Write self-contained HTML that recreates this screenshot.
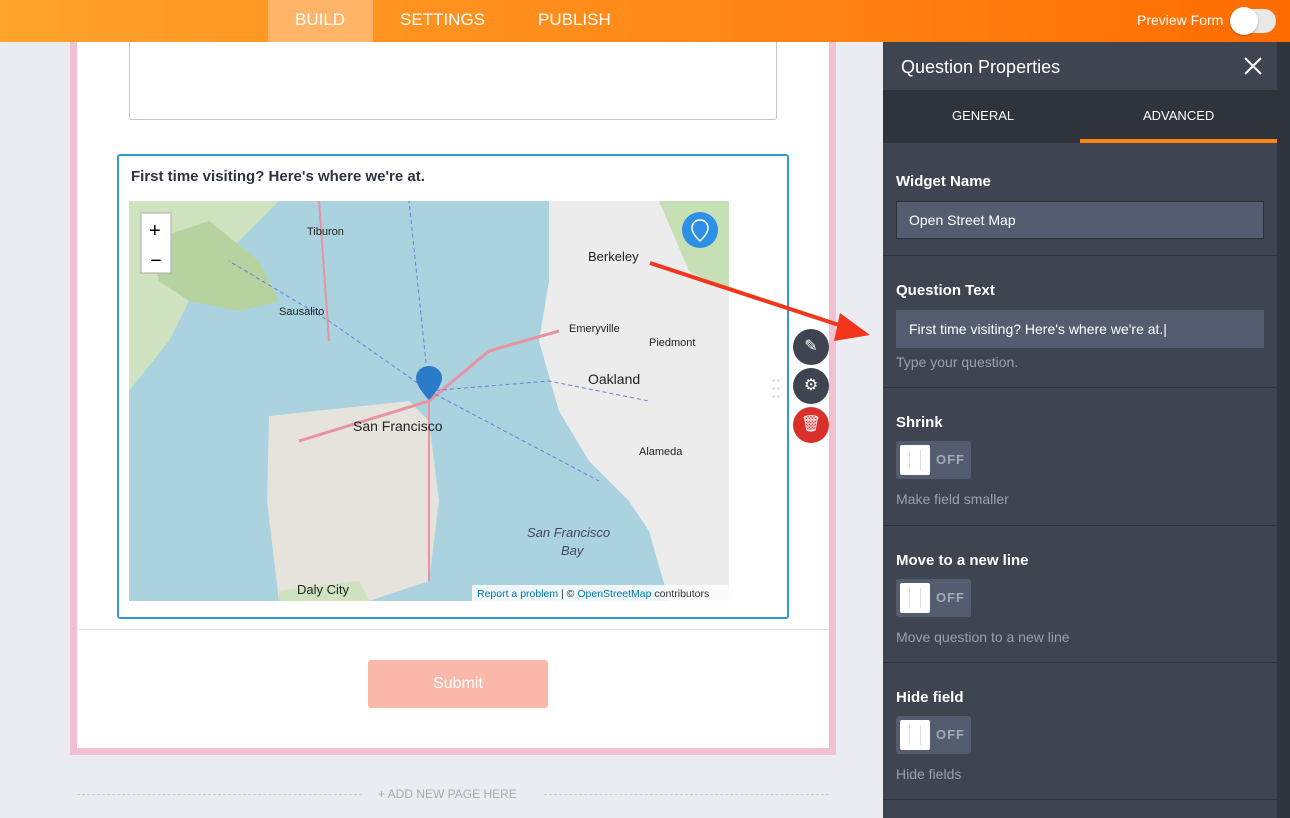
<!DOCTYPE html>
<html><head><style>
*{box-sizing:border-box;margin:0;padding:0}
body{width:1290px;height:818px;overflow:hidden;background:#ebecf1;font-family:"Liberation Sans",sans-serif;position:relative}
.hdr{position:absolute;left:0;top:0;width:1290px;height:42px;background:linear-gradient(90deg,#ffa32c,#ff8515 60%,#ff6c00);z-index:10}
.tab{position:absolute;top:0;height:42px;line-height:40px;color:#fff;font-size:17px}
.panel{position:absolute;left:883px;top:42px;width:394px;height:776px;background:#3e4450;color:#fff}
.sec{position:absolute;left:0;width:394px;border-bottom:1px solid #2f333b}
.lbl{position:absolute;left:13px;font-weight:bold;font-size:15px}
.inp{position:absolute;left:13px;width:368px;height:38px;background:#545d6f;border:1px solid #2c3038;color:#fff;font-size:14px;line-height:36px;padding-left:12px}
.hint{position:absolute;left:13px;font-size:14px;color:#9aa0ab}
.tg{position:absolute;left:13px;width:75px;height:38px;background:#545d6f;border-radius:3px}
.tg i{position:absolute;left:4px;top:4px;width:30px;height:30px;background:#fff;border-radius:2px}
.tg i:after{content:"";position:absolute;left:9px;top:5px;width:10px;height:20px;border-left:1px solid #ddd;border-right:1px solid #ddd}
.tg b{position:absolute;left:40px;top:11px;font-size:13px;color:#a3a9b5;letter-spacing:1px}
.circ{position:absolute;left:793px;width:36px;height:36px;border-radius:50%;background:#3e4450;color:#fff;text-align:center;line-height:36px;font-size:16px}
</style></head><body>
<div class="hdr">
<div style="position:absolute;left:268px;top:0;width:105px;height:42px;background:#ffb468"></div>
<div class="tab" style="left:295px">BUILD</div>
<div class="tab" style="left:400px">SETTINGS</div>
<div class="tab" style="left:538px">PUBLISH</div>
<div class="tab" style="left:1137px;font-size:14px">Preview Form</div>
<div style="position:absolute;left:1232px;top:9px;width:44px;height:24px;border-radius:12px;background:#e8e8e8"></div>
<div style="position:absolute;left:1230px;top:7px;width:28px;height:28px;border-radius:50%;background:#fff;box-shadow:0 1px 2px rgba(0,0,0,.3)"></div>
</div>
<div style="position:absolute;left:70px;top:42px;width:766px;height:713px;background:#f2c1d1"></div>
<div style="position:absolute;left:77px;top:42px;width:752px;height:706px;background:#fff"></div>
<div style="position:absolute;left:129px;top:30px;width:648px;height:90px;border:1px solid #c5c7cf;border-radius:3px;background:#fff"></div>
<div style="position:absolute;left:117px;top:154px;width:672px;height:465px;border:2px solid #2e9bd6;border-radius:3px"></div>
<div style="position:absolute;left:131px;top:168px;font-size:15px;font-weight:bold;color:#2c3345">First time visiting? Here's where we're at.</div>
<svg style="position:absolute;left:129px;top:201px" width="600" height="400" viewBox="0 0 600 400">
<rect width="600" height="400" fill="#aad3df"/>
<path d="M0 0H150L120 30L90 60L60 100L40 140L0 190Z" fill="#cfe3c0"/>
<path d="M20 40L80 20L130 60L150 100L110 110L60 100L30 80Z" fill="#b5d29f"/>
<path d="M420 0H600V400H540L520 330L500 300L460 260L430 210L410 140L420 80Z" fill="#ececec"/>
<path d="M530 0H600V90L560 70Z" fill="#c7dfb4"/>
<path d="M140 215L280 200L300 220L310 300L300 380L240 400H150L138 300Z" fill="#e6e2dc"/>
<path d="M150 390L230 380L240 400H150Z" fill="#cfe3c0"/>
<path d="M0 250L40 200L50 400H0Z" fill="#aad3df"/>
<path d="M170 240L300 200L360 150L430 130" stroke="#e892a2" stroke-width="3" fill="none"/>
<path d="M190 0L200 140" stroke="#e892a2" stroke-width="2" fill="none"/>
<path d="M300 200L300 380" stroke="#e892a2" stroke-width="2" fill="none"/>
<g stroke="#6a7fd9" stroke-dasharray="4 3" fill="none" stroke-width="1">
<path d="M300 190L200 120L100 60"/><path d="M300 190L420 180L520 200"/><path d="M300 190L470 280"/><path d="M300 190L280 0"/></g>
<text x="224" y="230" font-size="14" fill="#222" font-family="Liberation Sans">San Francisco</text>
<text x="459" y="183" font-size="14" fill="#222" font-family="Liberation Sans">Oakland</text>
<text x="459" y="60" font-size="13" fill="#222" font-family="Liberation Sans">Berkeley</text>
<text x="178" y="34" font-size="11" fill="#222" font-family="Liberation Sans">Tiburon</text>
<text x="150" y="114" font-size="11" fill="#222" font-family="Liberation Sans">Sausalito</text>
<text x="440" y="131" font-size="11" fill="#222" font-family="Liberation Sans">Emeryville</text>
<text x="520" y="145" font-size="11" fill="#222" font-family="Liberation Sans">Piedmont</text>
<text x="510" y="254" font-size="11" fill="#222" font-family="Liberation Sans">Alameda</text>
<text x="168" y="393" font-size="13" fill="#222" font-family="Liberation Sans">Daly City</text>
<text x="398" y="336" font-size="13" fill="#446" font-style="italic" font-family="Liberation Sans">San Francisco</text>
<text x="432" y="354" font-size="13" fill="#446" font-style="italic" font-family="Liberation Sans">Bay</text>
<rect x="12" y="12" width="30" height="60" fill="#fff" stroke="#aaa"/>
<text x="20" y="36" font-size="20" fill="#000" font-family="Liberation Sans">+</text>
<text x="21" y="66" font-size="20" fill="#000" font-family="Liberation Sans">−</text>
<circle cx="571" cy="29" r="18" fill="#2d8fe6"/>
<path d="M571 19c-5 0-8 4-8 8 0 6 8 13 8 13s8-7 8-13c0-4-3-8-8-8z" fill="none" stroke="#fff" stroke-width="1.5"/>
<path d="M300 165c-8 0-13 6-13 12 0 9 13 22 13 22s13-13 13-22c0-6-5-12-13-12z" fill="#2a7bc8"/>
<rect x="343" y="384" width="257" height="16" fill="rgba(255,255,255,.8)"/>
<text x="348" y="396" font-size="10.5" fill="#333" font-family="Liberation Sans"><tspan fill="#0078a8">Report a problem</tspan> | © <tspan fill="#0078a8">OpenStreetMap</tspan> contributors</text>
</svg>
<svg style="position:absolute;left:640px;top:255px" width="240" height="90"><path d="M10 8L205 72" stroke="#f2361d" stroke-width="4"/><path d="M230 80L200 58L194 86Z" fill="#f2361d"/></svg>
<div style="position:absolute;left:772px;top:377px;color:#ccc;font-size:8px;line-height:8px">• •<br>• •<br>• •</div>
<div class="circ" style="top:329px">✎</div>
<div class="circ" style="top:368px">⚙</div>
<div class="circ" style="top:407px;background:#d9302b">🗑</div>
<div style="position:absolute;left:77px;top:629px;width:752px;height:1px;background:#e3e4e8"></div>
<div style="position:absolute;left:368px;top:660px;width:180px;height:48px;background:#f9b8a9;border-radius:3px;color:#fff;font-size:16px;text-align:center;line-height:48px">Submit</div>
<div style="position:absolute;left:77px;top:794px;width:285px;border-top:1px dashed #c8cad2"></div>
<div style="position:absolute;left:544px;top:794px;width:285px;border-top:1px dashed #c8cad2"></div>
<div style="position:absolute;left:378px;top:787px;font-size:12px;color:#a5a8b3">+ ADD NEW PAGE HERE</div>
<div class="panel">
<div style="position:absolute;left:18px;top:15px;font-size:18px">Question Properties</div>
<svg style="position:absolute;left:361px;top:15px" width="18" height="18"><path d="M1 1L17 17M17 1L1 17" stroke="#fff" stroke-width="2"/></svg>
<div style="position:absolute;left:0;top:48px;width:394px;height:53px;background:#2f333b"></div>
<div style="position:absolute;left:69px;top:66px;font-size:13px">GENERAL</div>
<div style="position:absolute;left:260px;top:66px;font-size:13px">ADVANCED</div>
<div style="position:absolute;left:197px;top:97px;width:197px;height:4px;background:#ff8518"></div>
<div class="sec" style="top:101px;height:113px"><div class="lbl" style="top:30px">Widget Name</div><div class="inp" style="top:58px">Open Street Map</div></div>
<div class="sec" style="top:214px;height:132px"><div class="lbl" style="top:26px">Question Text</div><div class="inp" style="top:54px;border-color:#545d6f">First time visiting? Here's where we're at.|</div><div class="hint" style="top:98px">Type your question.</div></div>
<div class="sec" style="top:346px;height:138px"><div class="lbl" style="top:26px">Shrink</div><div class="tg" style="top:53px"><i></i><b>OFF</b></div><div class="hint" style="top:103px">Make field smaller</div></div>
<div class="sec" style="top:484px;height:137px"><div class="lbl" style="top:26px">Move to a new line</div><div class="tg" style="top:53px"><i></i><b>OFF</b></div><div class="hint" style="top:103px">Move question to a new line</div></div>
<div class="sec" style="top:621px;height:137px"><div class="lbl" style="top:26px">Hide field</div><div class="tg" style="top:53px"><i></i><b>OFF</b></div><div class="hint" style="top:103px">Hide fields</div></div>
</div>
<div style="position:absolute;left:1277px;top:42px;width:13px;height:776px;background:#2f333b"></div>
</body></html>
